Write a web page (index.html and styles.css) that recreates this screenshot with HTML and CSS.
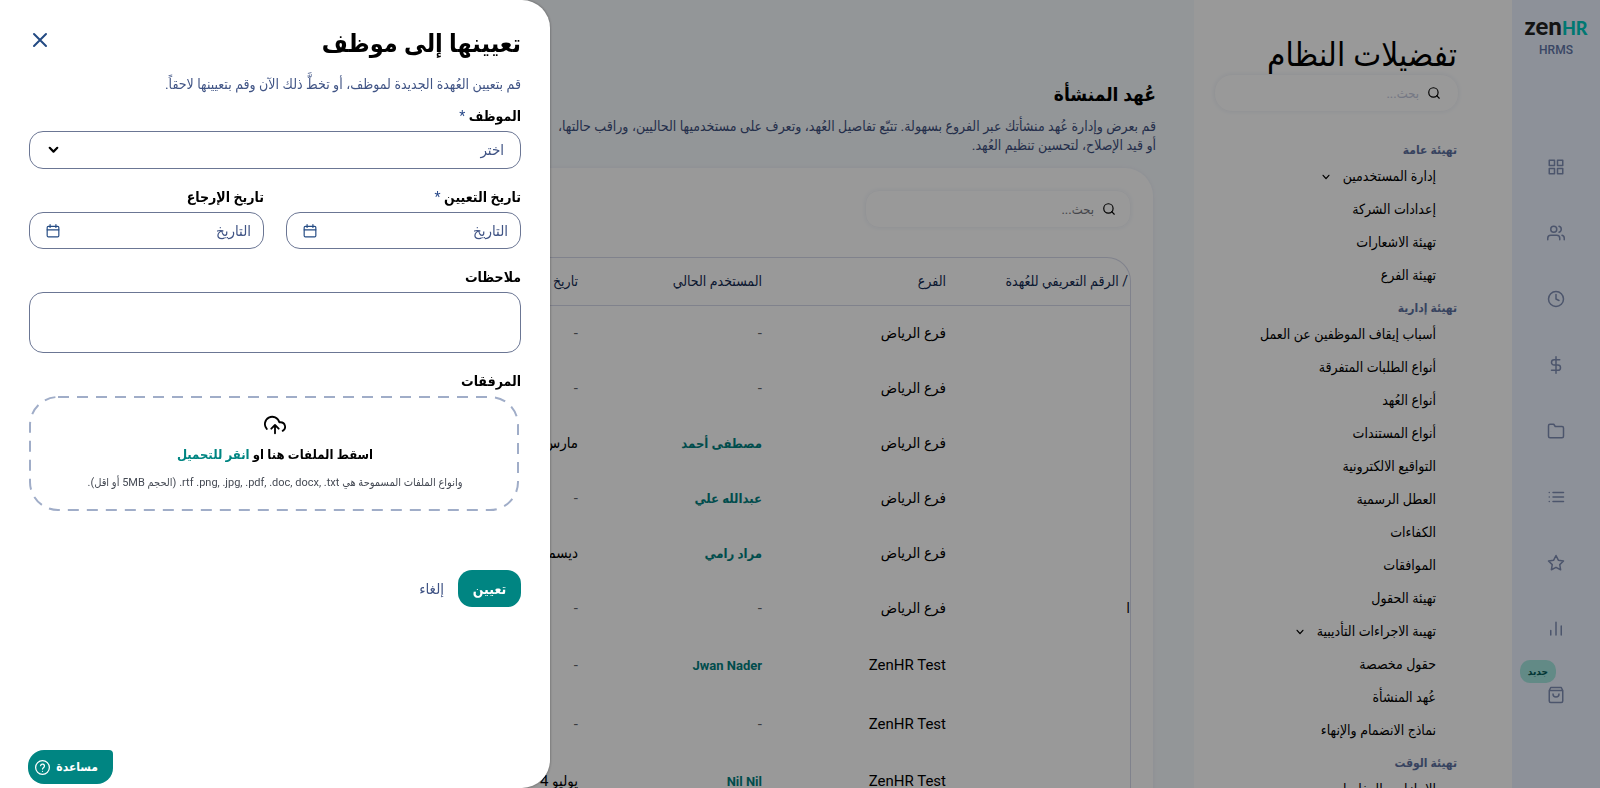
FILE: index.html
```html
<!DOCTYPE html>
<html lang="ar" dir="rtl">
<head>
    <meta charset="UTF-8">
    <meta name="viewport" content="width=device-width, initial-scale=1.0">
    <title>عُهد المنشأة</title>
    <link rel="stylesheet" href="styles.css">
</head>
<body>
    <div class="app">
        <nav class="rail">
            <a href="#" class="logo" dir="ltr"><span class="logo-zen">zen</span><span class="logo-hr">HR</span></a>
            <span class="product">HRMS</span>
            <div class="rail-icons">
                <a href="#" aria-label="الرئيسية"><svg class="icon" viewBox="0 0 24 24"><rect x="3" y="3" width="7" height="7"/><rect x="14" y="3" width="7" height="7"/><rect x="14" y="14" width="7" height="7"/><rect x="3" y="14" width="7" height="7"/></svg></a>
                <a href="#" aria-label="الموظفون"><svg class="icon" viewBox="0 0 24 24"><path d="M17 21v-2a4 4 0 0 0-4-4H5a4 4 0 0 0-4 4v2"/><circle cx="9" cy="7" r="4"/><path d="M23 21v-2a4 4 0 0 0-3-3.87M16 3.13a4 4 0 0 1 0 7.75"/></svg></a>
                <a href="#" aria-label="الوقت"><svg class="icon" viewBox="0 0 24 24"><circle cx="12" cy="12" r="10"/><path d="M12 6v6l4 2"/></svg></a>
                <a href="#" aria-label="المالية"><svg class="icon" viewBox="0 0 24 24"><path d="M12 1v22M17 5H9.500a3.500 3.500 0 0 0 0 7h5a3.500 3.500 0 0 1 0 7H6"/></svg></a>
                <a href="#" aria-label="المستندات"><svg class="icon" viewBox="0 0 24 24"><path d="M22 19a2 2 0 0 1-2 2H4a2 2 0 0 1-2-2V5a2 2 0 0 1 2-2h5l2 3h9a2 2 0 0 1 2 2z"/></svg></a>
                <a href="#" aria-label="القوائم"><svg class="icon" viewBox="0 0 24 24"><path d="M8 6h14M8 12h14M8 18h14M3 6h.01M3 12h.01M3 18h.01"/></svg></a>
                <a href="#" aria-label="الأداء"><svg class="icon" viewBox="0 0 24 24"><path d="M12 2l3.090 6.260L22 9.270l-5 4.870 1.180 6.880L12 17.770l-6.180 3.250L7 14.140 2 9.270l6.910-1.010z"/></svg></a>
                <a href="#" aria-label="التقارير"><svg class="icon" viewBox="0 0 24 24"><path d="M19 20V8M12 20V3M5 20v-6"/></svg></a>
                <a href="#" aria-label="المتجر"><svg class="icon" viewBox="0 0 24 24"><path d="M5 2h14l2 4v14a2 2 0 0 1-2 2H5a2 2 0 0 1-2-2V6zM3 6h18M16 10.500a4 4 0 0 1-8 0"/></svg><span class="badge">جديد</span></a>
            </div>
        </nav>

        <aside class="settings">
            <h1>تفضيلات النظام</h1>
            <label class="search search-settings">
                <svg class="icon" viewBox="0 0 24 24"><circle cx="11" cy="11" r="8"/><path d="M21 21l-4.350-4.350"/></svg>
                <input type="text" placeholder="بحث..." aria-label="بحث في الإعدادات">
            </label>
            <h2>تهيئة عامة</h2>
            <ul>
                <li><a href="#">إدارة المستخدمين<svg class="icon caret" viewBox="0 0 24 24"><path d="M5 8l7 8 7-8"/></svg></a></li>
                <li><a href="#">إعدادات الشركة</a></li>
                <li><a href="#">تهيئة الاشعارات</a></li>
                <li><a href="#">تهيئة الفرع</a></li>
            </ul>
            <h2>تهيئة إدارية</h2>
            <ul>
                <li><a href="#">أسباب إيقاف الموظفين عن العمل</a></li>
                <li><a href="#">أنواع الطلبات المتفرقة</a></li>
                <li><a href="#">أنواع العُهد</a></li>
                <li><a href="#">أنواع المستندات</a></li>
                <li><a href="#">التواقيع الالكترونية</a></li>
                <li><a href="#">العطل الرسمية</a></li>
                <li><a href="#">الكفاءات</a></li>
                <li><a href="#">الموافقات</a></li>
                <li><a href="#">تهيئة الحقول</a></li>
                <li><a href="#">تهيىة الاجراءات التأديبية<svg class="icon caret" viewBox="0 0 24 24"><path d="M5 8l7 8 7-8"/></svg></a></li>
                <li><a href="#">حقول مخصصة</a></li>
                <li><a href="#">عُهد المنشأة</a></li>
                <li><a href="#">نماذج الانضمام والإنهاء</a></li>
            </ul>
            <h2>تهيئة الوقت</h2>
            <ul>
                <li><a href="#">الاجازات والمغادرات</a></li>
            </ul>
        </aside>

        <main class="content">
            <h2>عُهد المنشأة</h2>
            <p class="intro">قم بعرض وإدارة عُهد منشأتك عبر الفروع بسهولة. تتبّع تفاصيل العُهد، وتعرف على مستخدميها الحاليين، وراقب حالتها،<br>أو قيد الإصلاح، لتحسين تنظيم العُهد.</p>
            <section class="card">
                <label class="search search-assets">
                    <svg class="icon" viewBox="0 0 24 24"><circle cx="11" cy="11" r="8"/><path d="M21 21l-4.350-4.350"/></svg>
                    <input type="text" placeholder="بحث..." aria-label="بحث في العُهد">
                </label>
                <div class="table-wrap">
                    <table>
                        <thead>
                            <tr><th class="serial">/ الرقم التعريفي للعُهدة</th><th>الفرع</th><th>المستخدم الحالي</th><th>تاريخ التعيين</th></tr>
                        </thead>
                        <tbody>
                            <tr><td></td><td>فرع الرياض</td><td class="none">-</td><td class="none">-</td></tr>
                            <tr><td></td><td>فرع الرياض</td><td class="none">-</td><td class="none">-</td></tr>
                            <tr><td></td><td>فرع الرياض</td><td><a href="#">مصطفى أحمد</a></td><td>مارس</td></tr>
                            <tr><td></td><td>فرع الرياض</td><td><a href="#">عبدالله علي</a></td><td class="none">-</td></tr>
                            <tr><td></td><td>فرع الرياض</td><td><a href="#">مراد رامي</a></td><td>ديسمبر</td></tr>
                            <tr><td>ا</td><td>فرع الرياض</td><td class="none">-</td><td class="none">-</td></tr>
                            <tr class="tall"><td></td><td>ZenHR Test</td><td><a href="#">Jwan Nader</a></td><td class="none">-</td></tr>
                            <tr class="tall"><td></td><td>ZenHR Test</td><td class="none">-</td><td class="none">-</td></tr>
                            <tr><td></td><td>ZenHR Test</td><td><a href="#">Nil Nil</a></td><td>يوليو 4</td></tr>
                        </tbody>
                    </table>
                </div>
            </section>
        </main>
    </div>

    <div class="overlay"></div>

    <form class="drawer">
        <header>
            <h2>تعيينها إلى موظف</h2>
            <button type="button" class="close" aria-label="إغلاق"><svg class="icon" viewBox="0 0 24 24"><path d="M3 3l18 18M21 3L3 21"/></svg></button>
        </header>
        <p class="hint">قم بتعيين العُهدة الجديدة لموظف، أو تخطَّ ذلك الآن وقم بتعيينها لاحقاً.</p>

        <div class="field">
            <label for="employee">الموظف <span class="required">*</span></label>
            <div class="control">
                <select id="employee"><option>اختر</option></select>
                <svg class="icon chevron" viewBox="0 0 24 24"><path d="M5 8l7 7 7-7"/></svg>
            </div>
        </div>

        <div class="dates">
            <div class="field">
                <label for="assignDate">تاريخ التعيين <span class="required">*</span></label>
                <div class="control">
                    <input type="text" id="assignDate" placeholder="التاريخ">
                    <svg class="icon calendar" viewBox="0 0 24 24"><rect x="2" y="4" width="20" height="18" rx="2"/><path d="M2 10h20M7 1v5M17 1v5"/></svg>
                </div>
            </div>
            <div class="field">
                <label for="returnDate">تاريخ الإرجاع</label>
                <div class="control">
                    <input type="text" id="returnDate" placeholder="التاريخ">
                    <svg class="icon calendar" viewBox="0 0 24 24"><rect x="2" y="4" width="20" height="18" rx="2"/><path d="M2 10h20M7 1v5M17 1v5"/></svg>
                </div>
            </div>
        </div>

        <div class="field">
            <label for="notes">ملاحظات</label>
            <textarea id="notes"></textarea>
        </div>

        <div class="field">
            <label for="files">المرفقات</label>
            <label class="dropzone" for="files">
                <svg class="dashes"><rect x="1" y="1" rx="28"/></svg>
                <svg class="icon cloud" viewBox="0 0 24 24"><path d="M16 16l-4-4-4 4M12 12v9M20.390 18.390A5 5 0 0 0 18 9h-1.260A8 8 0 1 0 3 16.300"/></svg>
                <strong>اسقط الملفات هنا او <span class="browse">انقر للتحميل</span></strong>
                <small>وانواع الملفات المسموحة هي rtf .png, .jpg, .pdf, .doc, docx, .txt. (الحجم 5MB أو اقل).</small>
            </label>
            <input type="file" id="files" class="file-input">
        </div>

        <div class="actions">
            <button type="submit" class="assign">تعيين</button>
            <button type="button" class="cancel">إلغاء</button>
        </div>
    </form>

    <button type="button" class="help">
        مساعدة
        <svg class="icon" viewBox="0 0 24 24"><circle cx="12" cy="12" r="11"/><path d="M9 9a3 3 0 0 1 6 1c0 2-3 2.500-3 4.500M12 18h.01"/></svg>
    </button>
</body>
</html>
```
FILE: styles.css
```css
/* CSS Styles */
* {
    box-sizing: border-box;
}
body {
    font-family: Roboto, "DejaVu Sans Condensed", "DejaVu Sans", sans-serif;
    background-color: #f6fafd;
    color: #000;
    margin: 0;
    height: 100vh;
    overflow: hidden;
}
h1, h2, p, ul {
    margin: 0;
    padding: 0;
}
ul {
    list-style: none;
}
a {
    color: inherit;
    text-decoration: none;
}
button, input, select, textarea {
    font-family: inherit;
}
.icon {
    width: 18px;
    height: 18px;
    fill: none;
    stroke: currentColor;
    stroke-width: 2;
    stroke-linecap: round;
    stroke-linejoin: round;
    flex: none;
}
.app {
    display: flex;
    height: 100vh;
    overflow: hidden;
}

/* Icon rail */
.rail {
    flex: 0 0 88px;
    display: flex;
    flex-direction: column;
    align-items: center;
    padding-top: 12px;
    background-color: #ecf2ff;
}
.logo {
    font-family: Lato, sans-serif;
    line-height: 28px;
    white-space: nowrap;
}
.logo-zen {
    font-size: 24px;
    font-weight: 900;
    color: #222;
}
.logo-hr {
    font-size: 18px;
    font-weight: 900;
    color: #00c8be;
}
.product {
    font-size: 12px;
    font-weight: 500;
    line-height: 14px;
    color: #5f75a8;
}
.rail-icons {
    display: flex;
    flex-direction: column;
    gap: 48px;
    margin-top: 101px;
    color: #7f8eb4;
}
.rail-icons a {
    position: relative;
    display: flex;
}
.badge {
    position: absolute;
    right: 9px;
    bottom: 21px;
    padding: 0 8px;
    border-radius: 10px;
    background-color: #a3e6df;
    color: #055c59;
    font-size: 10px;
    font-weight: 700;
    line-height: 23px;
}

/* Settings menu */
.settings {
    flex: 0 0 318px;
    padding: 36px 55px 0 22px;
    background-color: #fff;
}
.settings h1 {
    font-size: 33px;
    font-weight: 400;
    line-height: 38px;
    white-space: nowrap;
}
.settings h2 {
    height: 26px;
    padding-top: 6px;
    font-size: 12px;
    line-height: 20px;
    color: #5d719f;
}
.settings li {
    padding-right: 21px;
    font-size: 14px;
    line-height: 33px;
    white-space: nowrap;
}
.settings li a {
    display: flex;
    align-items: center;
    gap: 12px;
}
.caret {
    width: 10px;
    height: 10px;
    stroke-width: 3;
}
.search {
    display: flex;
    align-items: center;
    gap: 8px;
    height: 38px;
    padding: 0 14px;
    border: 1px solid #f5f7fb;
    border-radius: 14px;
    box-shadow: 0 0 4px #eef2f8;
}
.search .icon {
    width: 14px;
    height: 14px;
}
.search input {
    width: 100%;
    min-width: 0;
    padding: 0;
    border: 0;
    outline: 0;
    background: none;
    font-size: 13px;
}
.search input::placeholder {
    color: #73757d;
}
.search-settings {
    margin: 0 -2px 22px;
    padding: 0 17px;
    border-radius: 18px;
}
.search-settings input::placeholder {
    color: #c3c8dc;
}

/* Assets page */
.content {
    flex: 1;
    min-width: 0;
    padding: 82px 38px 0 0;
}
.content h2 {
    font-size: 19px;
    line-height: 26px;
}
.intro {
    margin: 9px 0 13px;
    font-size: 14px;
    line-height: 19px;
    color: #3d4f7d;
    white-space: nowrap;
}
.card {
    height: 800px;
    margin-right: 3px;
    padding: 22px 22px 0 0;
    border-radius: 0 28px 0 0;
    background-color: #fff;
    box-shadow: 0 0 4px #e8ecf8;
}
.search-assets {
    width: 266px;
    margin-bottom: 29px;
}
.table-wrap {
    overflow: hidden;
    border: 1px solid #d6d9ea;
    border-left: 0;
    border-radius: 0 24px 0 0;
}
table {
    width: 736px;
    table-layout: fixed;
    border-collapse: collapse;
}
th, td {
    width: 184px;
    padding: 0;
    text-align: right;
    white-space: nowrap;
}
th {
    height: 47px;
    border-bottom: 1px solid #d6d9ea;
    font-size: 14px;
    font-weight: 400;
    color: #122a52;
}
th.serial {
    padding-right: 2px;
}
td {
    height: 55px;
    font-size: 15px;
}
.tall td {
    height: 59px;
}
td a {
    font-size: 13px;
    font-weight: 700;
    color: #00807f;
}
td.none {
    color: #60646c;
}

/* Drawer */
.overlay {
    position: fixed;
    inset: 0;
    background-color: rgba(0, 0, 0, 0.4);
}
.drawer {
    position: fixed;
    top: 0;
    bottom: 0;
    left: 0;
    width: 550px;
    padding: 25px 29px;
    border-radius: 0 28px 28px 0;
    background-color: #fff;
    box-shadow: 0 0 3px rgba(0, 0, 0, 0.4);
}
.drawer header {
    display: flex;
    justify-content: space-between;
    height: 38px;
}
.drawer h2 {
    font-size: 25px;
    line-height: 38px;
}
.close {
    align-self: flex-start;
    padding: 7px 3px;
    border: 0;
    background: none;
    color: #234a83;
    line-height: 0;
}
.close .icon {
    width: 16px;
    height: 16px;
    stroke-width: 3;
}
.hint {
    margin: 11px 0 10px;
    font-size: 14px;
    line-height: 20px;
    color: #405485;
    white-space: nowrap;
}
.field {
    flex: 1;
    min-width: 0;
    margin-bottom: 16px;
}
.field > label:first-child {
    display: block;
    padding-bottom: 3px;
    font-size: 14px;
    font-weight: 700;
    line-height: 24px;
}
.required {
    color: #2a4a8a;
    font-weight: 400;
}
.control {
    position: relative;
}
.control input, .control select, textarea {
    display: block;
    width: 100%;
    height: 37px;
    padding: 0 12px;
    border: 1px solid #6b7694;
    border-radius: 14px;
    background-color: #fff;
    color: #405485;
    font-size: 15px;
}
.control select {
    height: 38px;
    padding: 0 16px;
    appearance: none;
}
.control input::placeholder {
    color: #405485;
}
textarea {
    height: 61px;
    resize: none;
}
.chevron, .calendar {
    position: absolute;
    left: 17px;
    top: 12px;
    width: 14px;
    height: 14px;
}
.chevron {
    left: 18px;
    width: 13px;
    stroke-width: 4;
}
.calendar {
    color: #234a83;
}
.dates {
    display: flex;
    gap: 22px;
}
.dropzone {
    position: relative;
    display: flex;
    flex-direction: column;
    align-items: center;
    height: 115px;
    padding-top: 18px;
}
.dashes {
    position: absolute;
    inset: 0;
    width: 100%;
    height: 100%;
    fill: none;
    stroke: #a0adc8;
    stroke-width: 2;
    stroke-dasharray: 11 8;
}
.dashes rect {
    width: calc(100% - 4px);
    height: calc(100% - 2px);
}
.cloud {
    width: 22px;
    height: 22px;
}
.dropzone strong {
    margin-top: 8px;
    font-size: 13px;
    line-height: 22px;
}
.browse {
    color: #008582;
}
.dropzone small {
    margin-top: 7px;
    font-size: 11px;
    line-height: 20px;
    color: #454a54;
    white-space: nowrap;
}
.file-input {
    display: none;
}
.actions {
    display: flex;
    gap: 14px;
    margin-top: 59px;
}
.actions button {
    height: 37px;
    border: 0;
    font-size: 14px;
}
.assign {
    width: 63px;
    padding: 0;
    border-radius: 14px;
    background-color: #008582;
    color: #fff;
    font-weight: 700;
}
.actions .cancel {
    padding: 0;
    background: none;
    color: #405485;
    font-size: 15px;
}
.help {
    position: fixed;
    left: 28px;
    bottom: 4px;
    display: flex;
    align-items: center;
    gap: 6px;
    width: 85px;
    height: 34px;
    padding: 0 15px 0 0;
    border: 0;
    border-radius: 16px 4px 16px 16px;
    background-color: #008582;
    color: #fff;
    font-size: 12px;
    font-weight: 700;
}
.help .icon {
    width: 15px;
    height: 15px;
}
```
